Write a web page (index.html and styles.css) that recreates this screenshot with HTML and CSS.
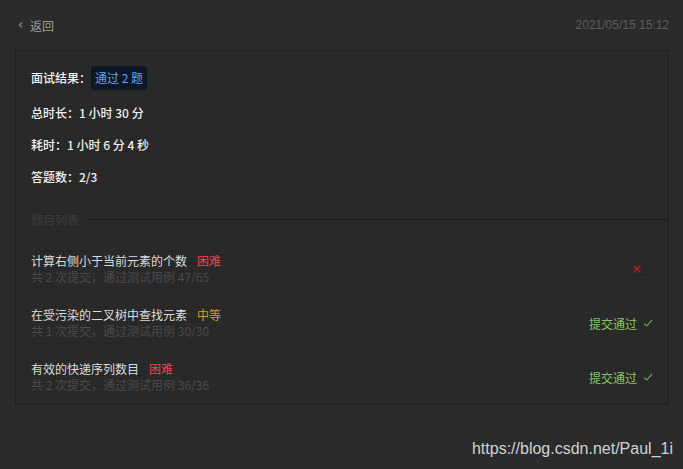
FILE: index.html
```html
<!DOCTYPE html>
<html lang="zh">
<head>
<meta charset="utf-8">
<link rel="stylesheet" href="styles.css">
</head>
<body>
<div class="page">
  <header class="topbar">
    <div class="back">
      <svg class="back-icon" width="8" height="10" viewBox="0 0 8 10"><path d="M5 2.5 L2.5 5 L5 7.5" fill="none" stroke="#8a8a8a" stroke-width="1.2"/></svg>
      <span>返回</span>
    </div>
    <div class="date">2021/05/15 15:12</div>
  </header>
  <section class="card">
    <div class="info">
      <div class="row"><span class="label">面试结果：</span><span class="tag">通过 2 题</span></div>
      <div class="row"><span class="label">总时长：</span><span class="val">1 小时 30 分</span></div>
      <div class="row"><span class="label">耗时：</span><span class="val">1 小时 6 分 4 秒</span></div>
      <div class="row"><span class="label">答题数：</span><span class="val">2/3</span></div>
    </div>
    <div class="divider"><span class="divider-text">题目列表</span><span class="divider-line"></span></div>
    <ul class="list">
      <li class="item">
        <div class="item-main">
          <div class="item-title">计算右侧小于当前元素的个数<span class="lvl hard">困难</span></div>
          <div class="item-sub">共 2 次提交，通过测试用例 47/65</div>
        </div>
        <div class="status fail">
          <svg width="10" height="10" viewBox="0 0 10 10"><path d="M1.5 1.5 L8.5 8.5 M8.5 1.5 L1.5 8.5" stroke="#b32a2a" stroke-width="1.2" fill="none"/></svg>
        </div>
      </li>
      <li class="item">
        <div class="item-main">
          <div class="item-title">在受污染的二叉树中查找元素<span class="lvl mid">中等</span></div>
          <div class="item-sub">共 1 次提交，通过测试用例 30/30</div>
        </div>
        <div class="status pass">提交通过
          <svg width="10" height="10" viewBox="0 0 10 10"><path d="M1 5.5 L3.8 8 L9 2" stroke="#6a9a4a" stroke-width="1.2" fill="none"/></svg>
        </div>
      </li>
      <li class="item">
        <div class="item-main">
          <div class="item-title">有效的快递序列数目<span class="lvl hard">困难</span></div>
          <div class="item-sub">共 2 次提交，通过测试用例 36/36</div>
        </div>
        <div class="status pass">提交通过
          <svg width="10" height="10" viewBox="0 0 10 10"><path d="M1 5.5 L3.8 8 L9 2" stroke="#6a9a4a" stroke-width="1.2" fill="none"/></svg>
        </div>
      </li>
    </ul>
  </section>
  <div class="watermark">https://blog.csdn.net/Paul_1i</div>
</div>
</body>
</html>
```
FILE: styles.css
```css
html, body {
  margin: 0;
  padding: 0;
  background: #2b2b2b;
}
body {
  font-family: "Noto Sans CJK SC", "Noto Sans", sans-serif;
  font-size: 12px;
  color: #e0e0e0;
  width: 683px;
  height: 469px;
  overflow: hidden;
}
.page {
  padding: 0 14px 0 15px;
  display: flex;
  flex-direction: column;
}
.topbar {
  height: 50px;
  display: flex;
  align-items: center;
  justify-content: space-between;
}
.back {
  display: flex;
  align-items: center;
  gap: 5px;
  padding-left: 2px;
  color: #9a9a9a;
  font-size: 12px;
}
.back-icon { display: block; }
.date {
  color: #5c5c5c;
  font-family: "Liberation Sans", Arial, sans-serif;
  font-size: 12px;
}
.card {
  border: 1px solid #1f1f1f;
  background-color: #282828;
  background-image: radial-gradient(circle, #2e2e2e 0.6px, transparent 0.9px);
  background-size: 4px 4px;
  padding: 15px 15px 0 15px;
}
.info {
  display: flex;
  flex-direction: column;
  gap: 14px;
}
.row {
  display: flex;
  align-items: center;
  line-height: 18px;
  font-weight: 500;
  color: #f0f0f0;
}
.label { color: #f2f2f2; }
.val { color: #f0f0f0; }
.tag {
  font-weight: normal;
  background: #0f1727;
  color: #5ba6f5;
  border-radius: 3px;
  height: 24px;
  line-height: 24px;
  padding: 0 4px;
}
.divider {
  display: flex;
  align-items: center;
  height: 18px;
  margin-top: 24px;
  margin-right: -15px;
}
.divider-text {
  color: #3c3c3c;
  font-size: 12px;
  padding-right: 8px;
}
.divider-line {
  flex: 1;
  border-top: 1px solid #1c1c1c;
}
.list {
  list-style: none;
  margin: 14px 0 0 0;
  padding: 0;
}
.item {
  display: flex;
  align-items: center;
  justify-content: space-between;
  padding: 11px 0;
}
.item-title {
  line-height: 16px;
  color: #dcdcdc;
}
.lvl { margin-left: 10px; }
.hard { color: #e5484a; }
.mid { color: #e1961a; }
.item-sub {
  line-height: 16px;
  color: #4a4a4a;
}
.status {
  display: flex;
  align-items: center;
  gap: 6px;
}
.status.fail { padding-right: 11px; }
.status.pass { color: #82c764; }
.status svg { display: block; }
.watermark {
  margin-top: 35px;
  align-self: flex-end;
  font-family: "Liberation Sans", Arial, sans-serif;
  font-size: 16px;
  color: #d2d2d2;
  margin-right: -4px;
}
```
